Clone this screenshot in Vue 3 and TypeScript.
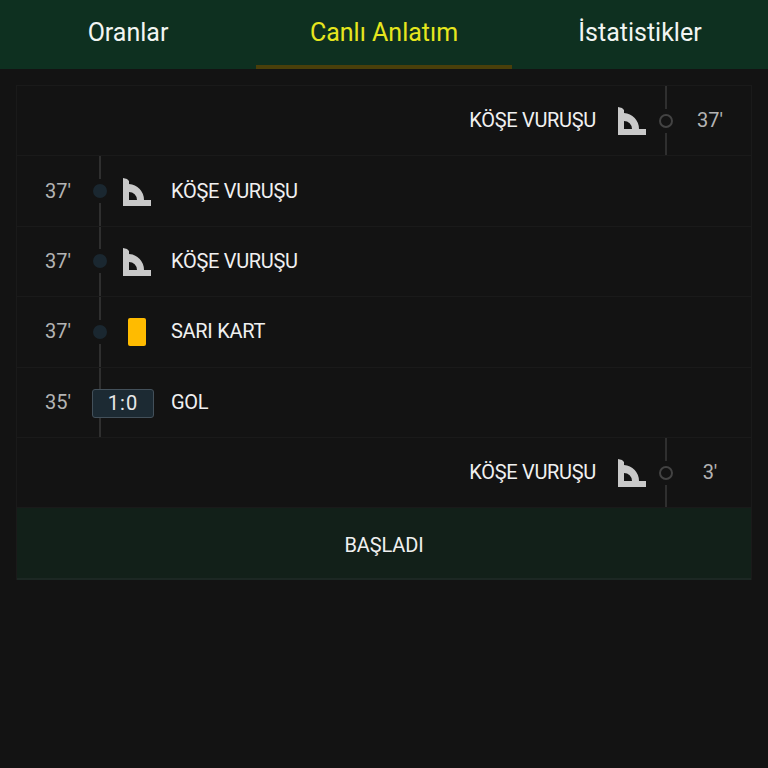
<script setup lang="ts">
interface EventRow {
  side: 'left' | 'right'
  minute: string
  label: string
  kind: 'corner' | 'card' | 'goal'
}
const tabs = ['Oranlar', 'Canlı Anlatım', 'İstatistikler']
const rows: EventRow[] = [
  { side: 'right', minute: "37'", label: 'KÖŞE VURUŞU', kind: 'corner' },
  { side: 'left', minute: "37'", label: 'KÖŞE VURUŞU', kind: 'corner' },
  { side: 'left', minute: "37'", label: 'KÖŞE VURUŞU', kind: 'corner' },
  { side: 'left', minute: "37'", label: 'SARI KART', kind: 'card' },
  { side: 'left', minute: "35'", label: 'GOL', kind: 'goal' },
  { side: 'right', minute: "3'", label: 'KÖŞE VURUŞU', kind: 'corner' }
]
</script>

<template>
  <div class="page">
    <nav class="tabs">
      <div v-for="(t, i) in tabs" :key="t" class="tab" :class="{ active: i === 1 }">{{ t }}</div>
    </nav>
    <section class="feed">
      <div v-for="(r, i) in rows" :key="i" class="row" :class="r.side">
        <div class="minute">{{ r.minute }}</div>
        <div class="axis">
          <span class="line"></span>
          <span class="dot" :class="{ hidden: r.kind === 'goal' }"></span>
          <span class="line"></span>
          <span v-if="r.kind === 'goal'" class="score">1:0</span>
        </div>
        <div class="icon">
          <svg v-if="r.kind === 'corner'" width="28" height="28" viewBox="0 0 28 28">
            <path
              fill="#c9c9c9"
              fill-rule="evenodd"
              d="M0 0 L4 1 L6 3 V6 A16 16 0 0 1 21 22 H28 V28 H0 Z M6 14 V22 H14 A8 8 0 0 0 6 14 Z"
            />
          </svg>
          <span v-else-if="r.kind === 'card'" class="card"></span>
        </div>
        <div class="label">{{ r.label }}</div>
      </div>
      <div class="banner">BAŞLADI</div>
    </section>
  </div>
</template>

<style scoped>
.page {
  width: 768px;
  height: 768px;
  background: #131313;
  font-family: Roboto, "Liberation Sans", sans-serif;
  overflow: hidden;
}
.tabs {
  display: flex;
  height: 69px;
  background: #0e3020;
}
.tab {
  flex: 1;
  display: flex;
  align-items: center;
  justify-content: center;
  box-sizing: border-box;
  border-bottom: 4px solid transparent;
  font-size: 25px;
  color: #f2f5f2;
}
.tab.active {
  color: #e6e61e;
  border-bottom-color: #4a3f0a;
}
.feed {
  margin: 16px 16px 0;
  border: 1px solid #1a1a1a;
  border-bottom: 0;
}
.row {
  display: flex;
  align-items: stretch;
  height: 70.4px;
  box-sizing: border-box;
  border-bottom: 1px solid #1a1a1a;
}
.row.right {
  flex-direction: row-reverse;
}
.minute {
  width: 52px;
  padding-left: 15px;
  flex: none;
  display: flex;
  align-items: center;
  justify-content: center;
  padding-bottom: 1px;
  font-size: 20px;
  color: #b4b4b4;
}
.row.right .minute {
  padding-left: 0;
  padding-right: 13px;
  width: 56px;
}
.axis {
  position: relative;
  width: 32px;
  flex: none;
  display: flex;
  flex-direction: column;
  align-items: center;
}
.line {
  flex: 1;
  width: 2px;
  background: #2f2f2f;
}
.dot {
  flex: none;
  width: 14px;
  height: 14px;
  margin: 5px 0;
  box-sizing: border-box;
  border-radius: 50%;
  background: #1a2730;
}
.row.right .dot {
  background: transparent;
  border: 2px solid #434343;
}
.dot.hidden {
  background: #131313;
}
.score {
  position: absolute;
  left: 8px;
  top: 21px;
  width: 62px;
  height: 29px;
  box-sizing: border-box;
  display: flex;
  align-items: center;
  justify-content: center;
  background: #1c2a33;
  border: 1px solid #43505a;
  border-radius: 3px;
  font-size: 20px;
  letter-spacing: 1px;
  color: #e8e8e8;
}
.icon {
  width: 28px;
  flex: none;
  margin-left: 7px;
  display: flex;
  align-items: center;
  justify-content: center;
  padding-top: 1px;
}
.row.right .icon {
  margin-left: 0;
  margin-right: 4px;
}
.card {
  width: 18px;
  height: 28px;
  margin-left: -1px;
  background: #ffbb00;
  border-radius: 2px;
}
.label {
  margin-left: 20px;
  display: flex;
  align-items: center;
  padding-bottom: 1px;
  font-size: 20px;
  letter-spacing: -0.3px;
  color: #f0f0f0;
}
.row.right .label {
  margin-left: 0;
  margin-right: 22px;
}
.banner {
  height: 72px;
  display: flex;
  align-items: center;
  justify-content: center;
  box-sizing: border-box;
  padding-top: 4px;
  background: #122019;
  border-bottom: 2px solid #1c2723;
  font-size: 20px;
  letter-spacing: -0.15px;
  color: #f0f0f0;
}
</style>
